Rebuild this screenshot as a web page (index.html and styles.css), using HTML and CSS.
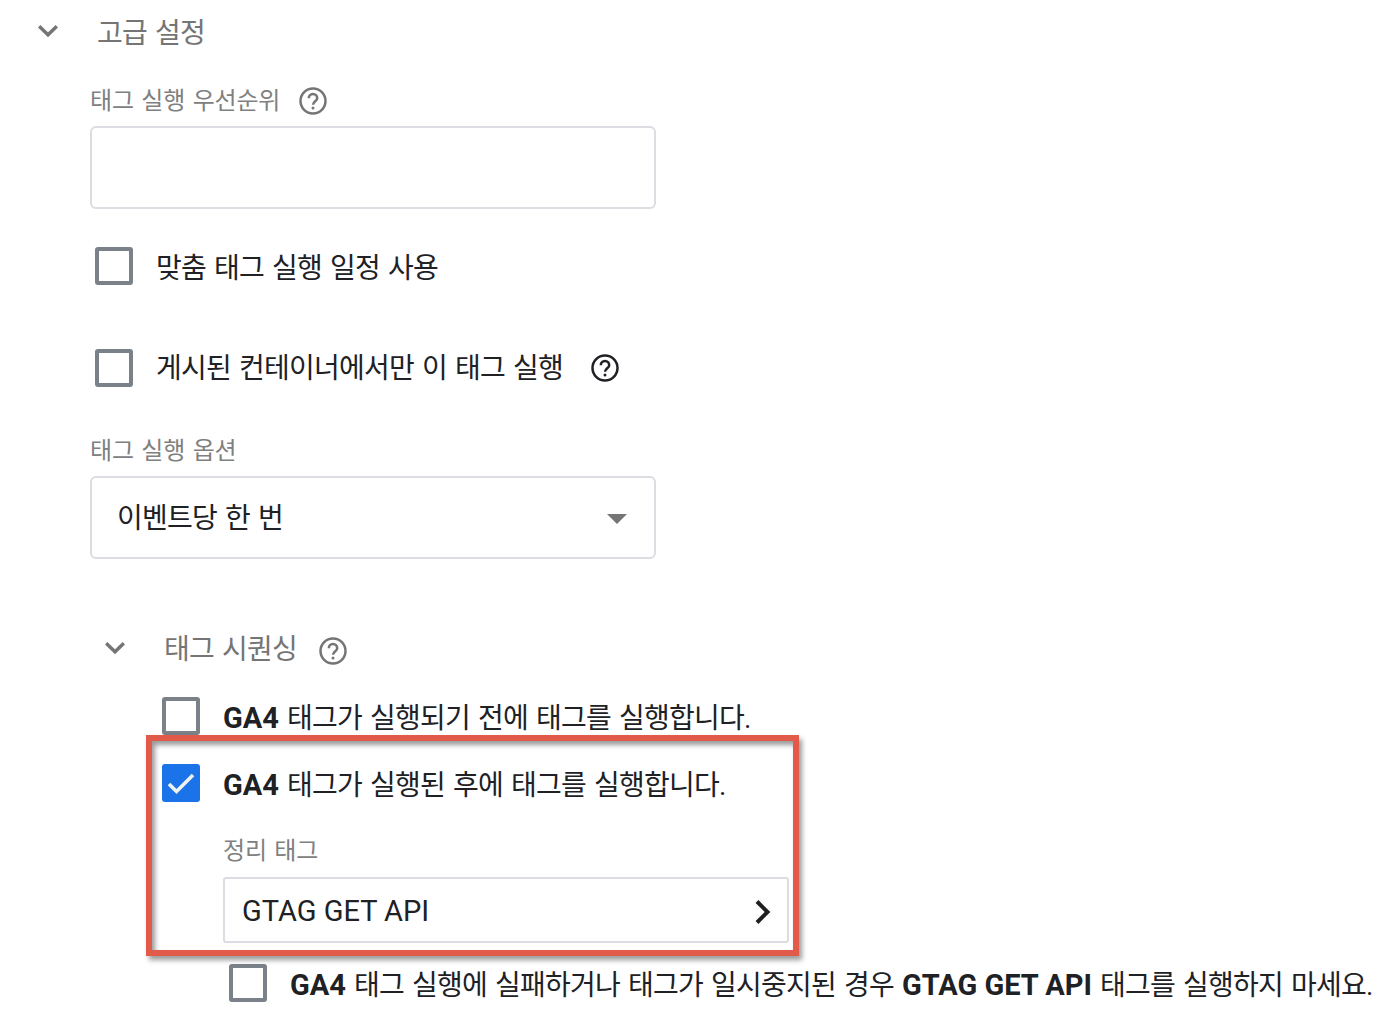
FILE: index.html
```html
<!DOCTYPE html>
<html lang="ko">
<head>
    <meta charset="UTF-8">
    <meta name="viewport" content="width=device-width, initial-scale=1.0">
    <title>고급 설정</title>
    <link rel="stylesheet" href="styles.css">
</head>
<body>
    <!-- Shared icons -->
    <svg class="icon-defs" width="0" height="0">
        <symbol id="chevron" viewBox="0 0 24 24">
            <path d="M3.200 7.200l8.800 8.600 8.800-8.600" fill="none" stroke="currentColor" stroke-width="3.400"/>
        </symbol>
        <symbol id="help" viewBox="0 0 28 28">
            <g fill="none" stroke="currentColor" stroke-width="2.500">
                <circle cx="14" cy="14" r="12.500"/>
                <path d="M9.800 11.200a4.200 4.200 0 1 1 8.400 0c0 2.900-4.200 3.200-4.200 6.600"/>
            </g>
            <circle cx="14" cy="21" r="1.500" fill="currentColor"/>
        </symbol>
    </svg>

    <main class="settings">
        <div class="section-head">
            <svg class="chevron"><use href="#chevron"/></svg>
            <h2>고급 설정</h2>
        </div>

        <div class="section-body">
            <div class="label label-priority">
                <span>태그 실행 우선순위</span>
                <svg class="help"><use href="#help"/></svg>
            </div>
            <div class="field"></div>

            <div class="check-row schedule">
                <span class="checkbox"></span>
                <span class="text">맞춤 태그 실행 일정 사용</span>
            </div>
            <div class="check-row published">
                <span class="checkbox"></span>
                <span class="text">게시된 컨테이너에서만 이 태그 실행</span>
                <svg class="help"><use href="#help"/></svg>
            </div>

            <div class="label label-option"><span>태그 실행 옵션</span></div>
            <div class="field select">
                <span class="text">이벤트당 한 번</span>
                <span class="arrow"></span>
            </div>
        </div>

        <div class="section-head sequence-head">
            <svg class="chevron"><use href="#chevron"/></svg>
            <h3>태그 시퀀싱</h3>
            <svg class="help"><use href="#help"/></svg>
        </div>

        <div class="sequence">
            <div class="check-row before">
                <span class="checkbox"></span>
                <span class="text"><b>GA4</b> 태그가 실행되기 전에 태그를 실행합니다.</span>
            </div>

            <div class="after">
                <div class="highlight"></div>
                <div class="check-row">
                    <span class="checkbox checked">
                        <svg viewBox="0 0 38 38"><path d="M7 20l7.500 7.500L31 11" fill="none" stroke="#f1f1f1" stroke-width="3.600"/></svg>
                    </span>
                    <span class="text"><b>GA4</b> 태그가 실행된 후에 태그를 실행합니다.</span>
                </div>
                <div class="cleanup">
                    <div class="label label-cleanup"><span>정리 태그</span></div>
                    <div class="tag-picker">
                        <span>GTAG GET API</span>
                        <svg class="next" viewBox="0 0 16 26"><path d="M2 2.500l10.500 10.500L2 23.500" fill="none" stroke="#1f1f1f" stroke-width="4"/></svg>
                    </div>
                </div>
            </div>

            <div class="check-row failed">
                <span class="checkbox"></span>
                <span class="text"><b>GA4</b> 태그 실행에 실패하거나 태그가 일시중지된 경우 <b>GTAG GET API</b> 태그를 실행하지 마세요.</span>
            </div>
        </div>
    </main>
</body>
</html>
```

FILE: styles.css
```css
* {
    margin: 0;
    padding: 0;
    box-sizing: border-box;
}

body {
    font-family: Roboto, "Noto Sans CJK KR", sans-serif;
    font-size: 28px;
    letter-spacing: -0.75px;
    word-spacing: 1.8px;
    line-height: 40px;
    background: #fff;
    color: #202124;
    overflow: hidden;
}

b {
    font-size: 29px;
    line-height: 1;
    letter-spacing: 0;
    word-spacing: 0;
}

.icon-defs {
    display: none;
}

.settings {
    width: 1391px;
    height: 1016px;
    white-space: nowrap;
}

.section-head {
    display: flex;
    align-items: center;
    height: 62px;
    padding-left: 36px;
    color: #757575;
}

.section-head h2,
.section-head h3 {
    font-size: 28px;
    font-weight: 400;
    margin-left: 37px;
}

.section-head h2 {
    padding-top: 5px;
}

.section-head h3 {
    padding-top: 3px;
}

.chevron {
    width: 24px;
    height: 24px;
}

.help {
    width: 28px;
    height: 28px;
}

.section-body {
    padding-left: 90px;
}

.label {
    display: flex;
    align-items: center;
    height: 40px;
    font-size: 24px;
    letter-spacing: -0.2px;
    color: #808080;
}

.label span {
    padding-top: 1px;
}

.label-priority {
    margin: 19px 0 5px;
}

.label-priority span {
    padding-top: 0;
}

.label .help {
    margin-left: 19px;
    color: #757575;
}

.field {
    width: 566px;
    height: 83px;
    border: 2px solid #dcdce2;
    border-radius: 6px;
}

.check-row {
    display: flex;
    align-items: center;
    height: 40px;
}

.checkbox {
    width: 38px;
    height: 38px;
    border: 4px solid #7a8188;
    border-radius: 3px;
}

.checkbox.checked {
    border: none;
    background: #1a73e8;
}

.checkbox svg {
    display: block;
}

.check-row .text {
    margin-left: 23px;
    padding-top: 6px;
}

.schedule {
    margin: 37px 0 0 5px;
}

.published {
    margin: 62px 0 0 5px;
}

.published .text {
    padding-top: 2px;
}

.published .help {
    margin-left: 28px;
}

.label-option {
    margin: 42px 0 6px;
}

.select {
    display: flex;
    align-items: center;
    justify-content: space-between;
    padding: 2px 27px 0 25px;
}

.arrow {
    border: 10px solid transparent;
    border-top-color: #757575;
    border-bottom: none;
}

.sequence-head {
    height: 40px;
    margin-top: 69px;
    padding-left: 103px;
}

.sequence-head .help {
    margin: 6px 0 0 22px;
}

.sequence {
    padding-left: 162px;
}

.before {
    margin-top: 28px;
}

.after {
    position: relative;
    margin-top: 27px;
}

/* Red frame drawn over the cleanup tag settings */
.highlight {
    position: absolute;
    top: -28px;
    left: -16px;
    width: 653px;
    height: 221px;
    border: 6px solid #e25b4a;
    box-shadow: 3px 4px 5px rgba(0, 0, 0, 0.4), inset 3px 4px 5px rgba(0, 0, 0, 0.4);
}

.cleanup {
    padding-left: 61px;
}

.label-cleanup {
    margin: 27px 0 7px;
}

.tag-picker {
    display: flex;
    align-items: center;
    justify-content: space-between;
    width: 566px;
    height: 66px;
    padding: 1px 16px 0 17px;
    border: 2px solid #dcdce2;
    border-radius: 3px;
    font-size: 29px;
    letter-spacing: 0;
    word-spacing: 0;
}

.next {
    width: 16px;
    height: 26px;
    margin-top: 2px;
}

.failed {
    margin: 20px 0 0 67px;
}
```
